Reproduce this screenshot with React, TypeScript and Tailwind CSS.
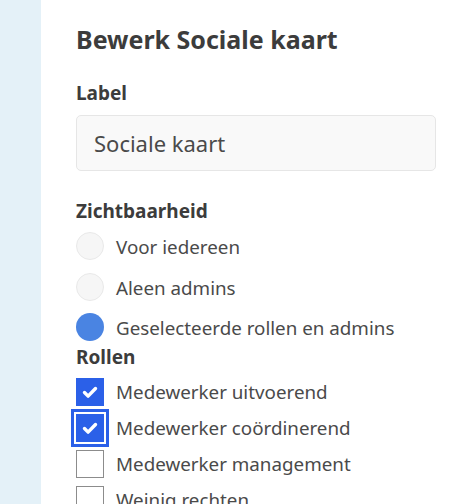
const font = { fontFamily: '"Noto Sans", "Open Sans", sans-serif' };

function Check() {
  return (
    <svg viewBox="0 0 28 28" className="h-full w-full">
      <path d="M8.5 14.5l3.6 3.6 7.4-7.6" fill="none" stroke="white" strokeWidth="3.4" strokeLinecap="round" strokeLinejoin="round" />
    </svg>
  );
}

function Radio({ label, checked }: { label: string; checked?: boolean }) {
  return (
    <div className="flex h-[28px] items-center gap-3">
      <span
        className={
          checked
            ? "h-[28px] w-[28px] shrink-0 rounded-full bg-[#4a84e2]"
            : "h-[28px] w-[28px] shrink-0 rounded-full border border-[#e9e9e9] bg-[#f6f6f6]"
        }
      />
      <span className="pt-[3px] text-[18.8px] leading-none text-[#4a4a4a]">{label}</span>
    </div>
  );
}

function Box({ label, checked, focused }: { label: string; checked?: boolean; focused?: boolean }) {
  let cls = "h-[28px] w-[28px] shrink-0 ";
  if (checked) cls += "bg-[#2b60e8]";
  else cls += "border-[1.5px] border-[#8c8c8c] bg-white";
  if (focused) cls += " outline-[3px] outline-offset-2 outline-[#2b60e8]";
  return (
    <div className="flex h-[28px] items-center gap-3">
      <span className={cls}>{checked && <Check />}</span>
      <span className="text-[18.8px] leading-none text-[#4a4a4a]">{label}</span>
    </div>
  );
}

export default function App() {
  return (
    <div className="flex min-h-[504px] w-[466px] bg-white" style={font}>
      <div className="w-[41px] shrink-0 bg-[#e4f1f8]" />
      <div className="flex flex-1 flex-col pl-[35px] pr-[30px] pt-[25px]">
        <h1 className="text-[25px] font-bold leading-[28px] text-[#3c3c3c]">Bewerk Sociale kaart</h1>
        <div className="mt-[29px] text-[19px] font-bold leading-[22px] text-[#3c3c3c]">Label</div>
        <div className="mt-[11px] flex h-[56px] items-center rounded-[5px] border border-[#e6e6e6] bg-[#f9f9f9] px-[17px] text-[22px] text-[#4a4a4a]">
          Sociale kaart
        </div>
        <div className="mt-[29px] text-[19px] font-bold leading-[22px] text-[#3c3c3c]">Zichtbaarheid</div>
        <div className="mt-[10px] flex flex-col gap-[12.5px]">
          <Radio label="Voor iedereen" />
          <Radio label="Aleen admins" />
          <Radio label="Geselecteerde rollen en admins" checked />
        </div>
        <div className="mt-[5px] text-[19px] font-bold leading-[22px] text-[#3c3c3c]">Rollen</div>
        <div className="mt-[10px] flex flex-col gap-[8px]">
          <Box label="Medewerker uitvoerend" checked />
          <Box label="Medewerker coördinerend" checked focused />
          <Box label="Medewerker management" />
          <Box label="Weinig rechten" />
        </div>
      </div>
    </div>
  );
}
